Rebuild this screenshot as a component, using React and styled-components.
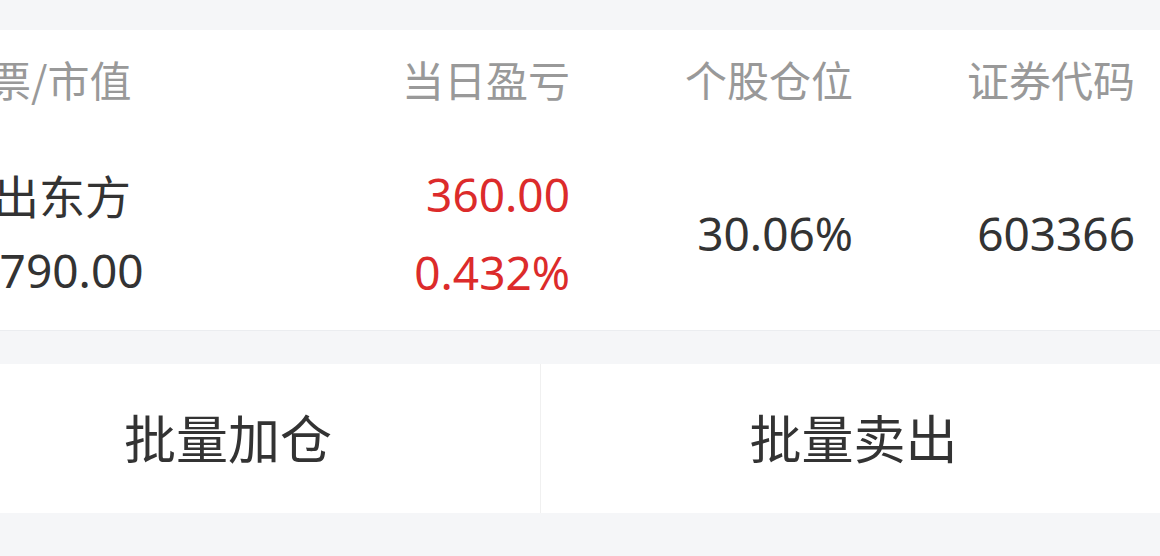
import React from "react";
import styled, { createGlobalStyle } from "styled-components";

const Global = createGlobalStyle`
  html, body { margin: 0; padding: 0; background: #f5f6f8; overflow: hidden; }
  body { font-family: "Noto Sans", "Noto Sans CJK SC", sans-serif; }
`;

const Screen = styled.div`
  margin-left: -90px;
  width: calc(100vw + 90px);
  height: 556px;
  background: #f5f6f8;
  padding-top: 30px;
  box-sizing: border-box;
  display: flex;
  flex-direction: column;
`;

const Card = styled.div`
  background: #fff;
  border-bottom: 1px solid #ebedf0;
`;

const Row = styled.div`
  display: grid;
  grid-template-columns: 1fr 283px 283px 282px;
  padding: 0 25px ${(p) => p.$pb || 0}px 37px;
  height: ${(p) => p.$h}px;
  box-sizing: border-box;
  align-items: center;
`;

const HeadCell = styled.div`
  font-family: "Noto Sans CJK SC", sans-serif;
  font-size: 42px;
  line-height: 50px;
  color: #999;
  text-align: ${(p) => (p.$left ? "left" : "right")};
  white-space: nowrap;
`;

const Cell = styled.div`
  display: flex;
  flex-direction: column;
  align-items: ${(p) => (p.$left ? "flex-start" : "flex-end")};
  font-size: 46px;
  line-height: 78px;
  color: ${(p) => (p.$red ? "#dc2b2b" : "#333")};
  white-space: nowrap;
`;

const Name = styled.span`
  font-family: "Noto Sans CJK SC", sans-serif;
  font-size: 46px;
  line-height: 74px;
`;

const Gap = styled.div`
  height: 33px;
`;

const ButtonBar = styled.div`
  display: flex;
  height: 149px;
  background: #fff;
`;

const ActionButton = styled.button`
  flex: ${(p) => (p.$first ? "0 0 630px" : "1")};
  border: none;
  background: #fff;
  border-left: ${(p) => (p.$first ? "none" : "1px solid #f0f0f0")};
  font-family: "Noto Sans CJK SC", sans-serif;
  font-size: 52px;
  line-height: 60px;
  color: #333;
  display: flex;
  align-items: center;
  justify-content: center;
  padding: 0 0 4px 6px;
  cursor: pointer;
`;

export default function App() {
  return (
    <>
      <Global />
      <Screen>
        <Card>
          <Row $h={106} $pb={8}>
            <HeadCell $left>股票/市值</HeadCell>
            <HeadCell>当日盈亏</HeadCell>
            <HeadCell>个股仓位</HeadCell>
            <HeadCell>证券代码</HeadCell>
          </Row>
          <Row $h={194}>
            <Cell $left>
              <Name>日出东方</Name>
              <span>83790.00</span>
            </Cell>
            <Cell $red>
              <span>360.00</span>
              <span>0.432%</span>
            </Cell>
            <Cell>
              <span>30.06%</span>
            </Cell>
            <Cell>
              <span>603366</span>
            </Cell>
          </Row>
        </Card>
        <Gap />
        <ButtonBar>
          <ActionButton $first>批量加仓</ActionButton>
          <ActionButton>批量卖出</ActionButton>
        </ButtonBar>
      </Screen>
    </>
  );
}
